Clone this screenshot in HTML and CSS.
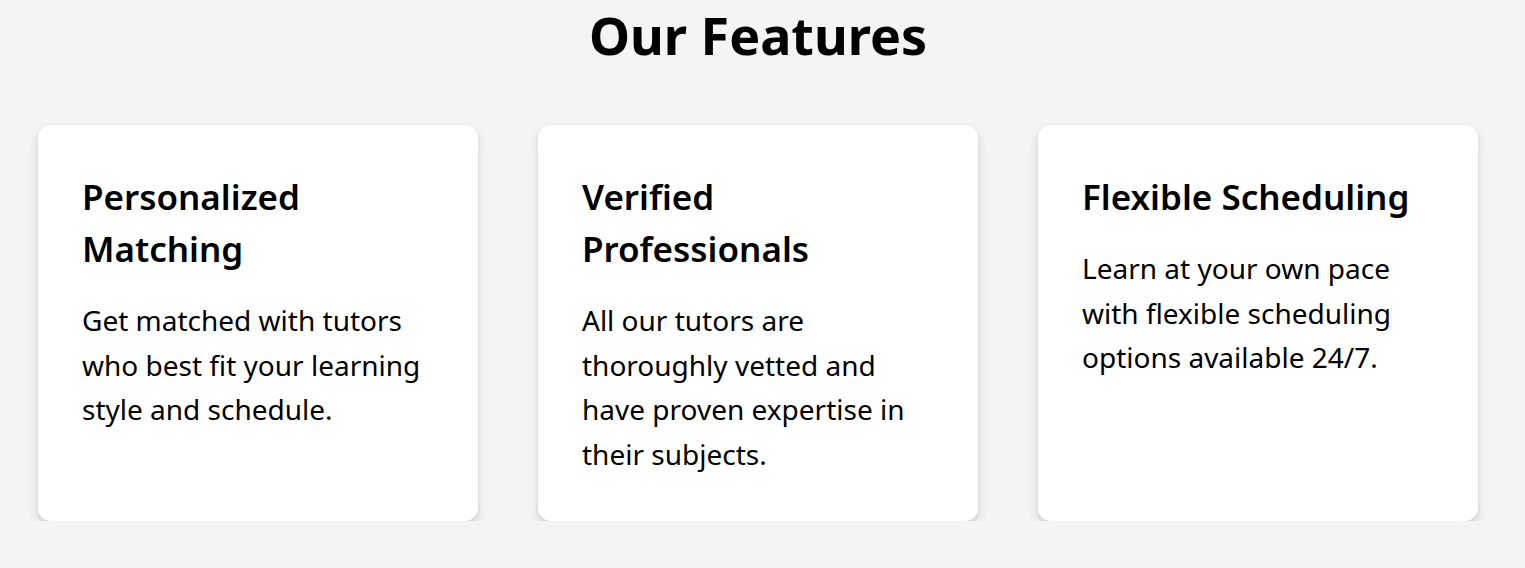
FILE: index.html
```html
<!DOCTYPE html>
<html lang="en">
<head>
<meta charset="utf-8">
<title>Our Features</title>
<link rel="stylesheet" href="styles.css">
</head>
<body>
<section class="features">
  <h2 class="features-title">Our Features</h2>
  <div class="features-grid">
    <article class="card">
      <h3 class="card-title">Personalized Matching</h3>
      <p class="card-text">Get matched with tutors who best fit your learning style and schedule.</p>
    </article>
    <article class="card">
      <h3 class="card-title">Verified Professionals</h3>
      <p class="card-text">All our tutors are thoroughly vetted and have proven expertise in their subjects.</p>
    </article>
    <article class="card">
      <h3 class="card-title">Flexible Scheduling</h3>
      <p class="card-text">Learn at your own pace with flexible scheduling options available 24/7.</p>
    </article>
  </div>
</section>
</body>
</html>
```
FILE: styles.css
```css
html, body {
  margin: 0;
  padding: 0;
  background: #f3f4f6;
}
body {
  font-family: "Noto Sans", "Open Sans", sans-serif;
  color: #000;
}
.features {
  width: 1440px;
  margin: 0 0 0 38px;
  padding-top: 5px;
}
.features-title {
  margin: 0;
  font-size: 52px;
  line-height: 60px;
  font-weight: 700;
  text-align: center;
}
.features-grid {
  display: grid;
  grid-template-columns: repeat(3, 440px);
  gap: 60px;
  margin-top: 60px;
}
.card {
  background: #fff;
  border-radius: 13px;
  padding: 46px 44px 45px;
  box-shadow: 0 6px 12px rgba(0, 0, 0, 0.12), 0 2px 4px rgba(0, 0, 0, 0.06);
}
.card-title {
  margin: 0;
  font-size: 35px;
  line-height: 52px;
  font-weight: 600;
}
.card-text {
  margin: 23px 0 0;
  font-size: 28px;
  line-height: 44.5px;
  font-weight: 400;
}
```
